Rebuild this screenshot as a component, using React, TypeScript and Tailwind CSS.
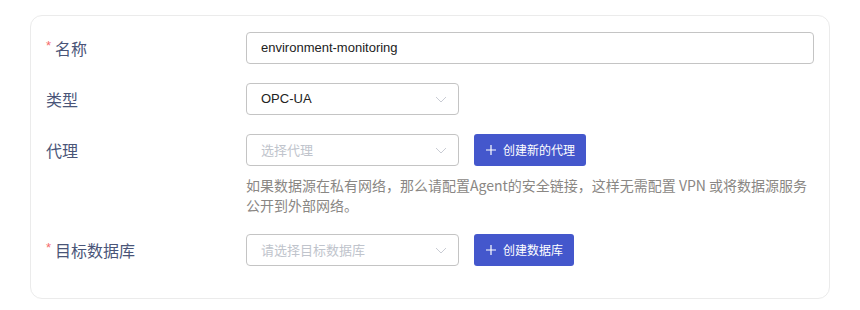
import React from "react";

const CJK = "'Noto Sans CJK SC', 'Noto Sans', sans-serif";
const LAT = "'Liberation Sans', 'Noto Sans CJK SC', sans-serif";

function Chevron() {
  return (
    <svg width="12" height="7" viewBox="0 0 12 7" fill="none" className="shrink-0">
      <path d="M1 1l5 5 5-5" stroke="#c9ccd4" strokeWidth="1" />
    </svg>
  );
}

function Plus() {
  return (
    <svg width="10" height="10" viewBox="0 0 10 10" fill="none" className="shrink-0">
      <path d="M5 0v10M0 5h10" stroke="#ffffff" strokeWidth="1.2" />
    </svg>
  );
}

function Label({ text, required }: { text: string; required?: boolean }) {
  return (
    <div
      className="flex h-8 items-center text-[16px] text-[#4a5578]"
      style={{ fontFamily: CJK }}
    >
      {required && (
        <span className="mr-[4px] -mt-[5px] text-[13px] text-[#f56c6c]" style={{ fontFamily: LAT }}>
          *
        </span>
      )}
      <span>{text}</span>
    </div>
  );
}

function Select({ value, placeholder }: { value?: string; placeholder?: string }) {
  return (
    <div
      className="flex h-8 w-[213px] items-center justify-between rounded-[4px] border border-[#c4c4c4] bg-white pl-[14px] pr-[11px] text-[13px]"
      style={{ fontFamily: LAT }}
    >
      {value ? (
        <span className="text-[#222]">{value}</span>
      ) : (
        <span className="text-[#c0c4cc]" style={{ fontFamily: CJK }}>
          {placeholder}
        </span>
      )}
      <Chevron />
    </div>
  );
}

function Btn({ text }: { text: string }) {
  return (
    <div
      className="ml-[15px] flex h-8 items-center gap-[7px] rounded-[3px] bg-[#4457cc] pl-[12px] pr-[11px] text-[12px] text-white"
      style={{ fontFamily: CJK }}
    >
      <Plus />
      <span>{text}</span>
    </div>
  );
}

export default function App() {
  return (
    <div className="h-[310px] w-[860px] bg-white pl-[30px] pt-[15px]">
      <div className="w-[800px] rounded-[12px] border border-[#ebebeb] bg-white pb-[32px] pl-[15px] pr-[15px] pt-[16px]">
        <div className="grid grid-cols-[200px_1fr]">
          <Label text="名称" required />
          <div
            className="flex h-8 items-center rounded-[4px] border border-[#c4c4c4] pl-[14px] text-[13px] text-[#222]"
            style={{ fontFamily: LAT }}
          >
            environment-monitoring
          </div>
        </div>

        <div className="mt-[19px] grid grid-cols-[200px_1fr]">
          <Label text="类型" />
          <div className="flex">
            <Select value="OPC-UA" />
          </div>
        </div>

        <div className="mt-[19px] grid grid-cols-[200px_1fr]">
          <Label text="代理" />
          <div>
            <div className="flex">
              <Select placeholder="选择代理" />
              <Btn text="创建新的代理" />
            </div>
            <p
              className="mt-[9px] text-[14px] leading-[20px] text-[#8a8784]"
              style={{ fontFamily: CJK }}
            >
              如果数据源在私有网络，那么请配置Agent的安全链接，这样无需配置 VPN 或将数据源服务
              <br />
              公开到外部网络。
            </p>
          </div>
        </div>

        <div className="mt-[19px] grid grid-cols-[200px_1fr]">
          <Label text="目标数据库" required />
          <div className="flex">
            <Select placeholder="请选择目标数据库" />
            <Btn text="创建数据库" />
          </div>
        </div>
      </div>
    </div>
  );
}
